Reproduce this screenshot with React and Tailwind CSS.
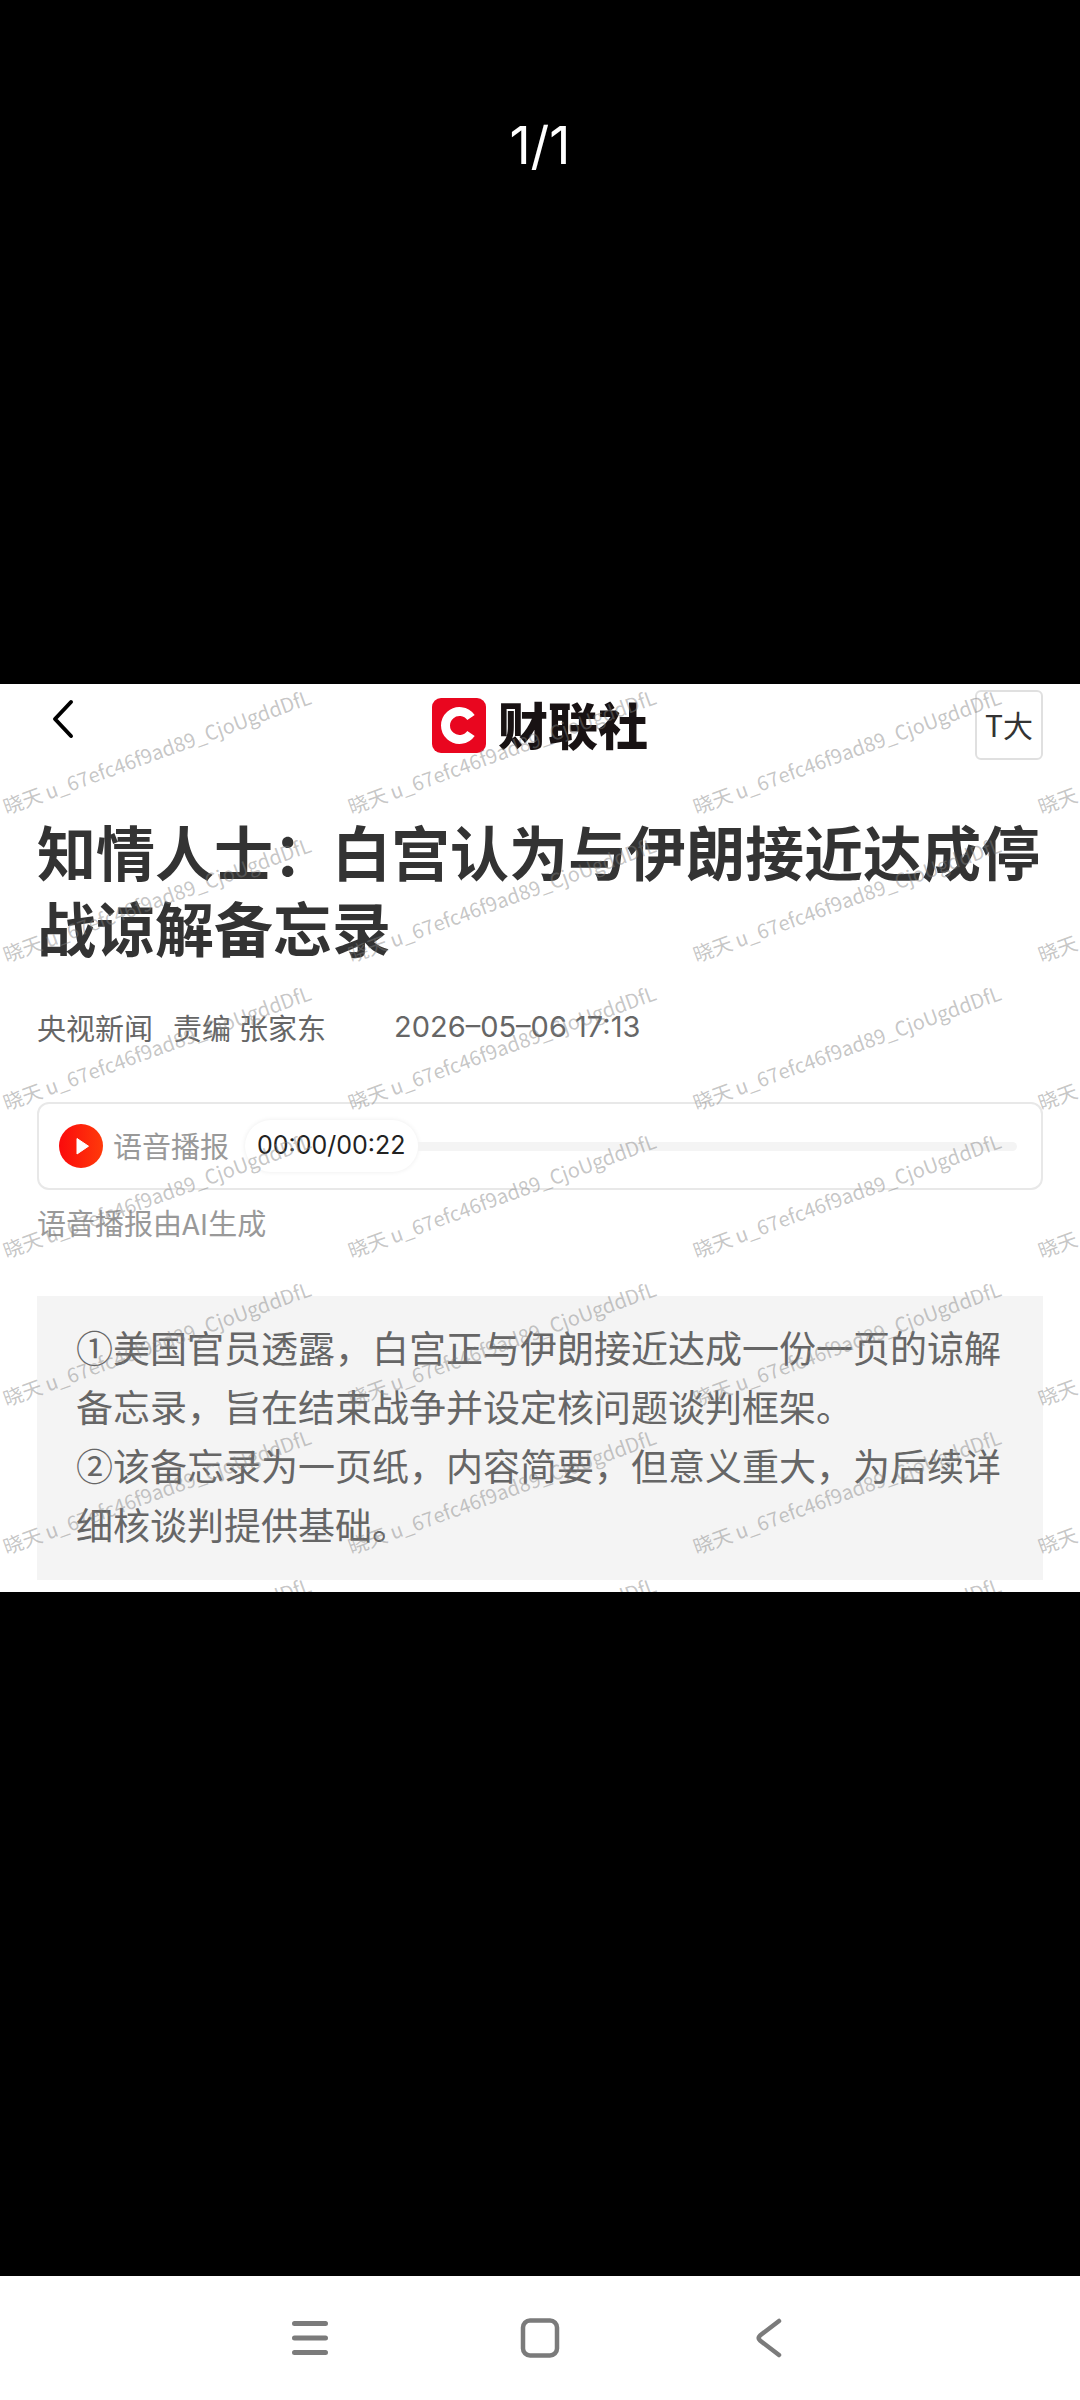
const WATERMARK = '晓天 u_67efc46f9ad89_CjoUgddDfL';

const summary = [
  '①美国官员透露，白宫正与伊朗接近达成一份一页的谅解备忘录，旨在结束战争并设定核问题谈判框架。',
  '②该备忘录为一页纸，内容简要，但意义重大，为后续详细核谈判提供基础。'
];

function Watermarks() {
  return (
    <div aria-hidden="true" className="pointer-events-none absolute inset-0 overflow-hidden">
      <div className="-mt-3 ml-1 grid auto-rows-[148px] grid-cols-[repeat(4,345px)] items-end">
        {Array.from({ length: 28 }, (_, i) => (
          <span
            key={i}
            className="w-0 origin-bottom-left -rotate-20 pl-1 text-[20px] leading-6 whitespace-nowrap text-[#808080]/45"
          >
            {WATERMARK}
          </span>
        ))}
      </div>
    </div>
  );
}

function Logo() {
  return (
    <div className="flex items-center gap-3">
      <svg className="h-[55px] w-[54px]" viewBox="0 0 54 55" fill="none">
        <rect width="54" height="55" rx="9" fill="#e9061f" />
        <path d="M39 19.5A14 14 0 1 0 39 35.5" stroke="#fff" strokeWidth="9" />
      </svg>
      <span className="pb-1 text-[50px] leading-[51px] font-black text-[#181213]">财联社</span>
    </div>
  );
}

function Header() {
  return (
    <header className="grid grid-cols-[1fr_auto_1fr] items-center py-1.5">
      <button type="button" aria-label="返回" className="mb-3 ml-3 justify-self-start">
        <svg className="h-10 w-7" viewBox="0 0 28 40" fill="none">
          <path
            d="M22 3L6 20L22 37"
            stroke="#000"
            strokeWidth="4"
            strokeLinecap="round"
            strokeLinejoin="round"
          />
        </svg>
      </button>
      <Logo />
      <button
        type="button"
        className="h-[70px] w-[68px] justify-self-end rounded-md border-2 border-[#e0e0e0] pb-0.5 text-[30px] whitespace-nowrap text-[#333]"
      >
        T大
      </button>
    </header>
  );
}

function AudioPlayer() {
  return (
    <div className="mt-[53px] flex h-[88px] items-center rounded-xl border-2 border-[#e8e8e8] pr-6 pl-5">
      <button type="button" aria-label="播放">
        <svg className="size-[44px]" viewBox="0 0 44 44">
          <defs>
            <linearGradient id="play" x1="0" y1="0" x2="1" y2="0">
              <stop offset="0" stopColor="#fb0a0c" />
              <stop offset="1" stopColor="#ff3a0a" />
            </linearGradient>
          </defs>
          <circle cx="22" cy="22" r="22" fill="url(#play)" />
          <path d="M18 14.5V30L29.500 22.200Z" fill="#fff" stroke="#fff" strokeLinejoin="round" />
        </svg>
      </button>
      <label htmlFor="progress" className="ml-2.5 pb-0.5 text-[29px] leading-[44px] text-[#999]">
        语音播报
      </label>
      <output
        htmlFor="progress"
        className="ml-4 flex h-[52px] items-center rounded-full px-3 font-[Inter] text-[25px] whitespace-nowrap text-[#222] shadow-[0_0_5px_rgba(0,0,0,0.08)]"
      >
        00:00/00:22
      </output>
      <input
        id="progress"
        type="range"
        min="0"
        max="22"
        defaultValue="0"
        className="h-[9px] min-w-0 flex-1 appearance-none rounded-r-full bg-[#f4f4f4] [&::-webkit-slider-thumb]:appearance-none"
      />
    </div>
  );
}

function Article() {
  return (
    <article className="relative bg-white px-[37px] pb-3 font-['Noto_Sans_CJK_SC',sans-serif]">
      <Header />
      <h1 className="mt-[47px] text-[59px] leading-[76px] font-bold text-[#333]">
        知情人士：白宫认为与伊朗接近达成停战谅解备忘录
      </h1>
      <div className="mt-10 flex text-[29px] leading-[44px] text-[#666]">
        <span>央视新闻</span>
        <span className="ml-5">责编</span>
        <span className="ml-2">张家东</span>
        <time className="ml-17 font-[Inter]" dateTime="2026-05-06T17:13">
          2026–05–06 17:13
        </time>
      </div>
      <AudioPlayer />
      <p className="mt-2.5 text-[29px] leading-[44px] text-[#999]">语音播报由AI生成</p>
      <div className="mt-[52px] bg-[#f4f4f4] px-[39px] pt-[22px] pb-[26px] text-[37px] leading-[59px] text-[#666]">
        {summary.map((line) => (
          <p key={line}>{line}</p>
        ))}
      </div>
      <Watermarks />
    </article>
  );
}

function NavBar() {
  return (
    <nav className="flex h-[124px] items-center justify-center bg-white text-[#7b7b7b]">
      <button type="button" aria-label="最近任务" className="flex w-[230px] justify-center">
        <svg className="size-11" viewBox="0 0 44 44" fill="none" stroke="currentColor">
          <path d="M6.500 7.500H37.500M6.500 22H37.500M6.500 36.500H37.500" strokeWidth="5" strokeLinecap="round" />
        </svg>
      </button>
      <button type="button" aria-label="主屏幕" className="flex w-[230px] justify-center">
        <svg className="size-11" viewBox="0 0 44 44" fill="none" stroke="currentColor">
          <rect x="5" y="4.500" width="34" height="35" rx="7" strokeWidth="4.500" />
        </svg>
      </button>
      <button type="button" aria-label="返回上一页" className="flex w-[230px] justify-center">
        <svg className="size-11" viewBox="0 0 44 44" fill="none" stroke="currentColor">
          <path
            d="M31 5L12 19.500Q9.500 22 12 24.500L31 39"
            strokeWidth="4.500"
            strokeLinecap="round"
            strokeLinejoin="round"
          />
        </svg>
      </button>
    </nav>
  );
}

function App() {
  return (
    <div className="flex min-h-screen flex-col bg-black">
      <main className="relative flex flex-1 flex-col justify-center">
        <p className="absolute inset-x-0 top-[114px] text-center font-[Inter] text-[52px] leading-[64px] text-white">
          1/1
        </p>
        <Article />
      </main>
      <NavBar />
    </div>
  );
}

export default App;
